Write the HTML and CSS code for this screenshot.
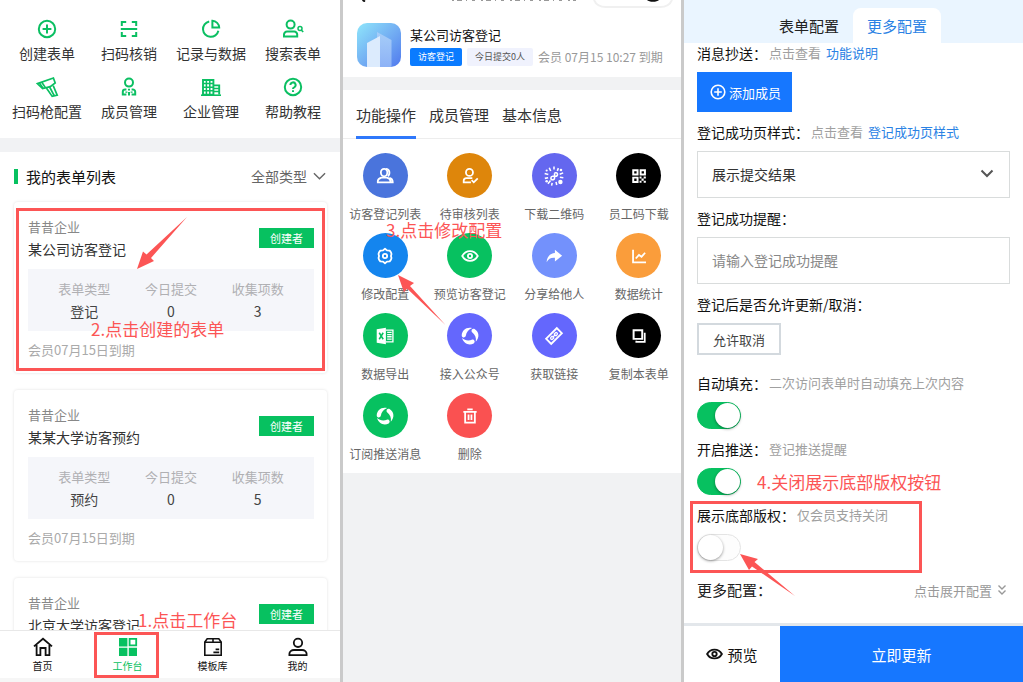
FILE: index.html
```html
<!DOCTYPE html>
<html lang="zh-CN">
<head>
<meta charset="utf-8">
<title>访客登记配置指引</title>
<link rel="stylesheet" href="styles.css">
</head>
<body>
<div class="board">

  <section class="panel workbench">
    <div class="scroll">
      <nav class="shortcuts">
        <a class="shortcut" href="#"><svg class="icon" viewBox="0 0 20 20"><circle cx="10" cy="10" r="8.2"/><path d="M10 5.6v8.8M5.6 10h8.8"/></svg>创建表单</a>
        <a class="shortcut" href="#"><svg class="icon" viewBox="0 0 20 20"><path d="M2.8 7V3h4.4M12.8 3h4.4v4M2.8 13v4h4.4M12.8 17h4.4v-4M1.8 10h16.4"/></svg>扫码核销</a>
        <a class="shortcut" href="#"><svg class="icon" viewBox="0 0 20 20"><path d="M8.2 2.4a7.8 7.8 0 1 0 9.2 9.4M11.4 1.8v6.8h6.8a7 7 0 0 0-6.8-6.8z"/></svg>记录与数据</a>
        <a class="shortcut" href="#"><svg class="icon" viewBox="0 0 20 20"><circle cx="7.6" cy="5.6" r="4"/><path d="M1 17.600v-2a3 3 0 0 1 3-3h7.200a3 3 0 0 1 3 3v2z"/><circle cx="17" cy="9.600" r="2" stroke-width="1.500"/><path d="M18.200 11l2 2" stroke-width="1.700"/></svg>搜索表单</a>
        <a class="shortcut" href="#"><svg class="icon" viewBox="0 0 20 20"><g stroke-width="1.700"><path d="M.4 6.600L16.400 1l1.800 5-5 3.600-7.600 2z"/><path d="M2.400 6l3.800 5.400M4.800 5.200l3.600 5.400M9.400 11l5.800 8.400 5-1.200-4-9.600M12.600 10l4.600 8.600"/></g></svg>扫码枪配置</a>
        <a class="shortcut" href="#"><svg class="icon" viewBox="0 0 20 20"><circle cx="10" cy="5.600" r="4"/><path d="M7.400 12.400H6.200A2.400 2.400 0 0 0 3.800 14.800v2.800h3.600M12.600 12.400h1.200a2.400 2.400 0 0 1 2.400 2.400v2.800h-3.600M10 11.800v1.800M10 15v3.600M7.400 14.400v1.400M12.600 14.400v1.400"/></svg>成员管理</a>
        <a class="shortcut" href="#"><svg class="icon" viewBox="0 0 20 20"><path d="M0 18.200h20" stroke-width="1.600"/><path d="M2 3h10.400v14.600H2zM12.400 8.400h5.800v9.200" stroke-width="1.900"/><path d="M5.400 3v14M8.800 3v14M2 6.600h10.400M2 10.200h10.400M2 13.800h10.400M13 11.600h5M13 14.600h5" stroke-width="1.500"/></svg>企业管理</a>
        <a class="shortcut" href="#"><svg class="icon" viewBox="0 0 20 20"><circle cx="10" cy="10" r="8.200"/><path d="M7.400 8a2.600 2.600 0 1 1 3.800 2.300c-.9.400-1.200.8-1.200 1.700M10 13.200v1.800"/></svg>帮助教程</a>
      </nav>
      <div class="list-head">
        <h2 class="list-title">我的表单列表</h2>
        <button class="filter" type="button">全部类型<svg class="filter-arrow" viewBox="0 0 14 8"><path d="M1 1l6 6 6-6"/></svg></button>
      </div>
      <div class="cards">
        <article class="card">
          <div class="card-head">
            <div><p class="org">昔昔企业</p><h3 class="form-name">某公司访客登记</h3></div>
            <span class="role">创建者</span>
          </div>
          <dl class="stats">
            <div><dt>表单类型</dt><dd>登记</dd></div>
            <div><dt>今日提交</dt><dd>0</dd></div>
            <div><dt>收集项数</dt><dd>3</dd></div>
          </dl>
          <p class="expiry">会员07月15日到期</p>
        </article>
        <article class="card">
          <div class="card-head">
            <div><p class="org">昔昔企业</p><h3 class="form-name">某某大学访客预约</h3></div>
            <span class="role">创建者</span>
          </div>
          <dl class="stats">
            <div><dt>表单类型</dt><dd>预约</dd></div>
            <div><dt>今日提交</dt><dd>0</dd></div>
            <div><dt>收集项数</dt><dd>5</dd></div>
          </dl>
          <p class="expiry">会员07月15日到期</p>
        </article>
        <article class="card">
          <div class="card-head">
            <div><p class="org">昔昔企业</p><h3 class="form-name">北京大学访客登记</h3></div>
            <span class="role">创建者</span>
          </div>
        </article>
      </div>
    </div>
    <nav class="tabbar">
      <a class="tab" href="#"><svg class="tab-icon" viewBox="0 0 20 20"><path d="M1 9.400L10 1.800l9 7.600M3.600 8v10.200h3.800V11h5.200v7.200h3.800V8"/></svg>首页</a>
      <a class="tab tab-on" href="#"><svg class="tab-icon" viewBox="0 0 20 20"><g fill="currentColor" stroke="none"><path d="M1 1h8.400v8.400H1zM1 10.800h8.400V19H1zM10.800 10.800H19V19h-8.200z"/></g><path d="M11.600 1.800h6.600v6.600h-6.600z"/></svg>工作台</a>
      <a class="tab" href="#"><svg class="tab-icon" viewBox="0 0 20 20"><path d="M1.800 5l2.400-3.200h11.600L18.200 5v13.200H1.800zM1.800 5.200h16.400M10 1.800v3.400M12.600 12.400h3.600M10.400 15.400h5.800" stroke-width="1.600"/></svg>模板库</a>
      <a class="tab" href="#"><svg class="tab-icon" viewBox="0 0 20 20"><circle cx="10" cy="5.800" r="4.200"/><path d="M1.400 18.200v-1.400c0-2 2-3.800 4.600-3.800h8c2.600 0 4.600 1.800 4.600 3.800v1.400z"/></svg>我的</a>
    </nav>
    <div class="mark mark-card"></div>
    <div class="mark mark-tab"></div>
    <svg class="arrow arrow-card" viewBox="0 0 50 52"><path d="M0 52L6 34.500l3.500 3L50 0 14 41l3 3z"/></svg>
    <p class="note note-card">2.点击创建的表单</p>
    <p class="note note-tab">1.点击工作台</p>
  </section>

  <section class="panel manage">
    <header class="form-head">
      <svg class="form-logo" viewBox="0 0 44 44">
        <defs>
          <linearGradient id="sky" x1="0" y1="0" x2="1" y2="1"><stop offset="0" stop-color="#8fe6fb"/><stop offset=".5" stop-color="#74b0f3"/><stop offset="1" stop-color="#5079ee"/></linearGradient>
          <linearGradient id="wall" x1="0" y1="0" x2="0" y2="1"><stop offset="0" stop-color="#a6cdf8"/><stop offset="1" stop-color="#8db2f6"/></linearGradient>
        </defs>
        <rect width="44" height="44" rx="10" fill="url(#sky)"/>
        <path d="M20 9l14.500 8v27H20z" fill="url(#wall)"/>
        <path d="M10 20l13-7v31H10z" fill="#dcebfd"/>
      </svg>
      <div class="form-info">
        <h1 class="form-title">某公司访客登记</h1>
        <div class="form-meta"><span class="chip chip-on">访客登记</span><span class="chip">今日提交0人</span><span class="valid">会员 07月15 10:27 到期</span></div>
      </div>
    </header>
    <div class="ops">
      <nav class="ops-tabs">
        <a class="ops-tab ops-tab-on" href="#">功能操作</a>
        <a class="ops-tab" href="#">成员管理</a>
        <a class="ops-tab" href="#">基本信息</a>
      </nav>
      <div class="ops-grid">
        <a class="op" href="#"><span class="disc royal"><svg class="icon" viewBox="0 0 20 20"><ellipse cx="9" cy="6.200" rx="3.600" ry="4.200"/><path d="M2 17v-1.400c0-2.400 2.200-3.200 4-3.800h6c2 .6 4 1.400 4 3.800V17zM11 2c4.400 0 5 6 2.200 8.200M15 12c2.400.6 3.600 2 3.600 5H16"/></svg></span>访客登记列表</a>
        <a class="op" href="#"><span class="disc amber"><svg class="icon" viewBox="0 0 20 20"><circle cx="9.400" cy="6" r="3.900"/><path d="M11 17H3v-1.600c0-2 1.200-3 3-3h6.600M11.800 14.600l2.400 2.400 4.400-4.400"/></svg></span>待审核列表</a>
        <a class="op" href="#"><span class="disc iris"><svg class="icon icon-wide" viewBox="0 0 24 24"><path d="M12.600 9v5.400a2 2 0 1 1-2-2.200h3a1.900 1.900 0 1 0-1-3.200M12 1.600v3.200M10 19.400l-.6 3M6.800 3l1.600 3.600M16.800 3.400l-1.200 3M1.800 9.200l4 1.200M18.200 10L22 8.600M2 14.600l3.600-.8M18.400 13.400l3.800.6M5.400 20.400l2.800-3.600M14.200 18.400l.8 3.400" stroke-width="1.700"/><circle cx="19" cy="18.600" r="2.400" fill="currentColor" stroke="none"/><circle cx="19.600" cy="5.400" r="1.400" fill="currentColor" stroke="none"/><circle cx="4" cy="17.800" r="1.400" fill="currentColor" stroke="none"/><circle cx="4" cy="6" r="1.200" fill="currentColor" stroke="none"/></svg></span>下载二维码</a>
        <a class="op" href="#"><span class="disc black"><svg class="icon" viewBox="0 0 20 20"><path d="M3.600 3.600h4.800v4.800H3.600zM11.800 3.600h4.800v4.800h-4.800zM3.600 11.800h4.800v4.800H3.600z" stroke-width="2.200"/><path d="M10.600 10.600h2.200v2.200h-2.200zM15.200 10.600h2.400v2.200h-2.400zM12.800 12.800h2.400v2.400h-2.400zM10.600 15.200h2.200v2.400h-2.200zM15.200 15.200h2.400v2.400h-2.400z" fill="currentColor" stroke="none"/></svg></span>员工码下载</a>
        <a class="op" href="#"><span class="disc azure"><svg class="icon" viewBox="0 0 20 20"><path d="M10 2l2.200 1.800 3 .2 1.400 1.800.6 2L16.600 10l.6 2.200-.6 2-1.400 1.800-3 .2L10 18l-2.200-1.800-3-.2-1.400-1.800-.6-2 .6-2.200-.6-2.200.6-2L4.800 4l3-.2z" stroke-linejoin="round"/><circle cx="10" cy="10" r="2.400"/></svg></span>修改配置</a>
        <a class="op" href="#"><span class="disc green"><svg class="icon" viewBox="0 0 20 20"><path d="M1.400 10C5.400 2.800 14.600 2.800 18.600 10 14.600 17.200 5.400 17.200 1.400 10z"/><circle cx="10" cy="10" r="2.300"/></svg></span>预览访客登记</a>
        <a class="op" href="#"><span class="disc sky"><svg class="icon" viewBox="0 0 20 20"><path d="M11 3l8 6.600-8 6.400v-4c-4.600-.4-7 1.200-9.200 5C2 11 5.400 7.200 11 6.800z" fill="currentColor" stroke="none"/></svg></span>分享给他人</a>
        <a class="op" href="#"><span class="disc orange"><svg class="icon" viewBox="0 0 20 20"><path d="M3.400 3v14h14.400M6.400 12.800l3.600-4 2.800 2 4-4.400"/></svg></span>数据统计</a>
        <a class="op" href="#"><span class="disc green"><svg class="icon" viewBox="0 0 20 20"><path d="M.8 2.600L11 .8v18.400L.8 17.400z" fill="currentColor" stroke="none"/><path d="M11 3.400h7.800v13.200H11M12.400 6h5M12.400 8.400h5M12.400 10.800h5M12.400 13.400h5" stroke-width="1.500"/><path class="cut-green" d="M3.600 6.400l4.400 7.200M8 6.400l-4.400 7.200"/></svg></span>数据导出</a>
        <a class="op" href="#"><span class="disc violet"><svg class="icon" viewBox="0 0 20 20"><g id="swirl" fill="currentColor" stroke="none"><path d="M.8 9.400C1 3.600 6-.4 12.400 1.200 8.600 2.600 6 5.400 5.200 10.400 4.200 12.400 1 12 .8 9.400z"/><path d="M.8 9.400C1 3.600 6-.4 12.400 1.200 8.600 2.600 6 5.400 5.200 10.400 4.200 12.400 1 12 .8 9.400z" transform="rotate(120 10 10)"/><path d="M.8 9.400C1 3.600 6-.4 12.400 1.200 8.600 2.600 6 5.400 5.200 10.400 4.200 12.400 1 12 .8 9.400z" transform="rotate(240 10 10)"/></g></svg></span>接入公众号</a>
        <a class="op" href="#"><span class="disc violet"><svg class="icon" viewBox="0 0 20 20"><g transform="rotate(-45 10 10)"><rect x="1.600" y="6" width="16.800" height="8" stroke-width="2"/><path d="M9 8.600H6.600a1.400 1.400 0 0 0 0 2.800H9M11 8.600h2.400a1.400 1.400 0 0 1 0 2.800H11M7.600 10h4.800" stroke-width="1.400"/></g></svg></span>获取链接</a>
        <a class="op" href="#"><span class="disc black"><svg class="icon" viewBox="0 0 20 20"><path d="M4 3.600h9.600v9.600H4z" stroke-width="2.200"/><path d="M15.400 7.200h1v9.400H7v-1.400" stroke-width="1.900"/></svg></span>复制本表单</a>
        <a class="op" href="#"><span class="disc green"><svg class="icon" viewBox="0 0 20 20"><use href="#swirl"/></svg></span>订阅推送消息</a>
        <a class="op" href="#"><span class="disc red"><svg class="icon" viewBox="0 0 20 20"><path d="M2.600 5.400h14.800M7 2.600h6M4.600 5.400v12h10.800v-12M8.400 8.400v6M11.600 8.400v6" stroke-width="2"/></svg></span>删除</a>
      </div>
    </div>
    <svg class="back-edge" viewBox="0 0 6 2"><path d="M1.500 0l2.500 1.500" stroke="#111"/></svg>
    <svg class="title-edge" viewBox="0 0 126 2"><path d="M2 .5h124" stroke="#999" stroke-width="1" stroke-dasharray="2 3 5 4 1 5 3 6"/></svg>
    <svg class="capsule" viewBox="0 0 80 8"><path d="M1 0c2 5 6 7 12 7h54c6 0 10-2 12-7" stroke="#f0f0f0" fill="none"/><path d="M54 0c2 2.400 10 2.400 12 0z" fill="#111"/></svg>
    <svg class="arrow arrow-config" viewBox="0 0 48 50"><path d="M0 0l16 8-4 3 35.500 39L9 13.500l-3 4z"/></svg>
    <p class="note note-config">3.点击修改配置</p>
  </section>

  <section class="panel settings">
    <nav class="set-tabs">
      <a class="set-tab" href="#">表单配置</a>
      <a class="set-tab set-tab-on" href="#">更多配置</a>
    </nav>
    <form class="set-form">
      <div class="field">
        <p class="label">消息抄送：<span class="hint">点击查看 <a class="link" href="#">功能说明</a></span></p>
        <button class="add" type="button"><svg class="add-icon" viewBox="0 0 16 16"><circle cx="8" cy="8" r="6.800"/><path d="M8 4.200v7.600M4.200 8h7.600"/></svg>添加成员</button>
      </div>
      <div class="field">
        <p class="label"><label for="style">登记成功页样式：</label><span class="hint">点击查看 <a class="link" href="#">登记成功页样式</a></span></p>
        <div class="select-wrap">
          <select class="box" id="style"><option>展示提交结果</option></select>
          <svg class="select-arrow" viewBox="0 0 14 10"><path d="M1.500 1.500L7 7l5.500-5.500"/></svg>
        </div>
      </div>
      <div class="field">
        <label class="label" for="tip">登记成功提醒：</label>
        <input class="box" id="tip" type="text" placeholder="请输入登记成功提醒">
      </div>
      <div class="field field-loose">
        <p class="label">登记后是否允许更新/取消：</p>
        <button class="allow" type="button">允许取消</button>
      </div>
      <div class="field">
        <p class="label"><label for="fill">自动填充：</label><span class="hint">二次访问表单时自动填充上次内容</span></p>
        <input class="switch" id="fill" type="checkbox" checked>
      </div>
      <div class="field">
        <p class="label"><label for="push">开启推送：</label><span class="hint">登记推送提醒</span></p>
        <input class="switch" id="push" type="checkbox" checked>
      </div>
      <div class="field field-loose">
        <p class="label"><label for="copy">展示底部版权：</label><span class="hint">仅会员支持关闭</span></p>
        <input class="switch" id="copy" type="checkbox">
      </div>
      <div class="more">
        <span class="more-title">更多配置：</span>
        <button class="expand" type="button">点击展开配置<svg class="expand-icon" viewBox="0 0 10 12"><path d="M1.500 1.500L5 5l3.500-3.500M1.500 6.500L5 10l3.500-3.500"/></svg></button>
      </div>
    </form>
    <footer class="actions">
      <button class="preview" type="button"><svg class="eye" viewBox="0 0 18 14"><path d="M1.200 7C4.600.8 13.400.8 16.800 7 13.400 13.200 4.600 13.200 1.200 7z"/><circle cx="9" cy="7" r="2.300"/></svg>预览</button>
      <button class="submit" type="submit">立即更新</button>
    </footer>
    <div class="mark mark-copy"></div>
    <svg class="arrow arrow-copy" viewBox="0 0 55 42"><path d="M0 0l18 5-3.500 3L55 42 12 12.500 9 16z"/></svg>
    <p class="note note-copy">4.关闭展示底部版权按钮</p>
  </section>

</div>
</body>
</html>
```

FILE: styles.css
```css
* { box-sizing: border-box; }
body, h1, h2, h3, p, dl, dd { margin: 0; }
body, button, input, select {
  font-family: "Noto Sans CJK SC", "Noto Sans", sans-serif;
  font-weight: 400;
}
h1, h2, h3 { font-weight: 400; }
a { color: inherit; text-decoration: none; }
button { border: 0; padding: 0; background: none; color: inherit; cursor: pointer; }
svg { display: block; fill: none; stroke: currentColor; stroke-width: 2; flex: none; }

.board {
  display: grid;
  grid-template-columns: 340fr 338fr 339fr;
  gap: 3px;
  height: 100vh;
  background: #cacaca;
}
.panel {
  position: relative;
  display: flex;
  flex-direction: column;
  min-width: 0;
  overflow: hidden;
  background: #fff;
}
.icon { width: 20px; height: 20px; overflow: visible; }

/* workbench */
.scroll { flex: 1; min-height: 0; overflow: hidden; }
.shortcuts {
  display: grid;
  grid-template-columns: repeat(4, 1fr);
  row-gap: 13px;
  padding: 19px 6px 16px;
  border-bottom: 14px solid #f1f2f4;
}
.shortcut {
  display: flex;
  flex-direction: column;
  align-items: center;
  gap: 3px;
  font-size: 14px;
  line-height: 22px;
  color: #333;
  white-space: nowrap;
}
.shortcut .icon { color: #0bbf62; }
.list-head {
  display: flex;
  align-items: center;
  justify-content: space-between;
  height: 50px;
  padding: 0 14px 2px;
}
.list-title {
  display: flex;
  align-items: center;
  gap: 8px;
  font-size: 15px;
  color: #111;
}
.list-title::before { content: ""; width: 4px; height: 15px; background: #07c160; }
.filter {
  display: flex;
  align-items: center;
  gap: 6px;
  font-size: 14px;
  color: #666;
}
.filter-arrow { width: 13px; height: 8px; stroke-width: 1.5; }
.cards { display: flex; flex-direction: column; gap: 17px; padding: 0 13px 0 14px; }
.card {
  padding: 14px 13px 12px 14px;
  border-radius: 4px;
  box-shadow: 0 0 3px rgba(0, 0, 0, .13);
}
.card-head { display: flex; align-items: center; justify-content: space-between; }
.org { font-size: 13px; line-height: 22px; color: #888; }
.form-name { font-size: 14px; line-height: 23px; color: #333; }
.role {
  width: 55px;
  margin-bottom: 2px;
  font-size: 11px;
  line-height: 20px;
  text-align: center;
  color: #fff;
  background: #07c160;
}
.stats {
  display: grid;
  grid-template-columns: repeat(3, 1fr);
  margin: 8px 0;
  padding: 9px 13px 8px;
  text-align: center;
  background: #f5f6fa;
}
.stats dt { font-size: 13px; line-height: 22px; color: #b0b0b3; }
.stats dd { font-size: 14px; line-height: 23px; color: #444; }
.expiry { font-size: 13px; line-height: 22px; color: #aaa; }
.tabbar {
  display: grid;
  grid-template-columns: repeat(4, 1fr);
  padding: 6px 0 3px;
  background: #fff;
  border-top: 1px solid #e8e8e8;
  border-bottom: 4px solid #f6f6f6;
}
.tab {
  display: flex;
  flex-direction: column;
  align-items: center;
  font-size: 10px;
  line-height: 18px;
  color: #111;
}
.tab-icon { width: 20px; height: 20px; stroke-width: 1.8; }
.tab-on { color: #07c160; }

/* form management */
.manage { background: #f1f2f3; }
.form-head {
  display: flex;
  align-items: center;
  gap: 9px;
  padding: 23px 14px 10px;
  margin-bottom: 13px;
  background: #fff;
}
.form-logo { width: 44px; height: 44px; stroke: none; }
.form-info { display: flex; flex-direction: column; gap: 2px; }
.form-title { font-size: 13px; line-height: 22px; color: #111; }
.form-meta { display: flex; align-items: center; gap: 5px; white-space: nowrap; }
.chip {
  padding: 0 8px;
  font-size: 9px;
  line-height: 18px;
  color: #555;
  background: #f0f2fd;
  border-radius: 2px;
}
.chip-on { color: #fff; background: #0a7bff; }
.valid { font-size: 12px; line-height: 18px; color: #999; }
.ops { background: #fff; }
.ops-tabs {
  display: flex;
  gap: 13px;
  padding: 0 13px;
  border-bottom: 1px solid #ededed;
}
.ops-tab {
  margin-bottom: -1px;
  padding: 13px 0 9px;
  font-size: 15px;
  line-height: 24px;
  color: #333;
  border-bottom: 3px solid transparent;
}
.ops-tab-on { border-color: #2f78fb; }
.ops-grid {
  display: grid;
  grid-template-columns: repeat(4, 1fr);
  row-gap: 9px;
  padding: 14px 0 9px;
}
.op {
  display: flex;
  flex-direction: column;
  align-items: center;
  gap: 6px;
  font-size: 12px;
  line-height: 20px;
  color: #666;
  white-space: nowrap;
}
.disc {
  display: grid;
  place-items: center;
  width: 45px;
  height: 45px;
  border-radius: 50%;
  color: #fff;
}
.disc .icon { width: 18px; height: 18px; }
.disc .icon-wide { width: 22px; height: 22px; }
.royal { background: #4a74dc; }
.amber { background: #de860b; }
.iris { background: #6467ef; }
.black { background: #000; }
.azure { background: #1485ee; }
.green { background: #07c160; }
.sky { background: #7391fc; }
.orange { background: #fa9d3b; }
.violet { background: #6467fd; }
.red { background: #fa5151; }
.cut-green { stroke: #07c160; stroke-width: 1.7; }
.capsule { position: absolute; top: 0; right: 8px; width: 80px; height: 8px; stroke: none; }
.back-edge { position: absolute; top: 0; left: 18px; width: 6px; height: 2px; }
.title-edge { position: absolute; top: 0; left: 107px; width: 126px; height: 2px; }

/* settings */
.set-tabs {
  display: flex;
  justify-content: flex-end;
  padding: 8px 82px 0 0;
  background: #eaf5ff;
}
.set-tab { padding: 0 14px; font-size: 15px; line-height: 35px; color: #222; }
.set-tab-on { color: #2a82e4; background: #fff; border-radius: 8px 8px 0 0; }
.set-form { flex: 1; min-height: 0; padding: 0 13px; overflow: hidden; }
.field {
  display: flex;
  flex-direction: column;
  align-items: flex-start;
  gap: 9px;
  margin-bottom: 10px;
}
.field-loose { margin-bottom: 18px; }
.label {
  display: flex;
  gap: 2px;
  font-size: 14px;
  line-height: 20px;
  color: #111;
  white-space: nowrap;
}
.hint { font-size: 13px; color: #a0a0a0; }
.link { margin-left: 2px; color: #2a82e4; }
.add {
  display: flex;
  align-items: center;
  gap: 3px;
  height: 40px;
  padding: 0 11px 0 13px;
  font-size: 13px;
  color: #fff;
  background: #1677ff;
}
.add-icon { width: 16px; height: 16px; stroke-width: 1.6; }
.select-wrap { position: relative; align-self: stretch; }
.box {
  display: block;
  width: 100%;
  height: 47px;
  padding: 0 14px 2px;
  font-size: 14px;
  color: #333;
  background: #fff;
  border: 1px solid #d9dcdc;
  border-radius: 0;
  appearance: none;
}
.box::placeholder { color: #888; }
.select-arrow {
  position: absolute;
  top: 18px;
  right: 16px;
  width: 14px;
  height: 10px;
  color: #555;
  pointer-events: none;
}
.allow {
  height: 32px;
  padding: 0 14px;
  font-size: 13px;
  color: #444;
  border: 2px solid #d3d9de;
}
.switch {
  position: relative;
  width: 44px;
  height: 27px;
  margin: 0;
  border: 1px solid #e4e4e4;
  border-radius: 14px;
  background: #fdfdfd;
  appearance: none;
}
.switch::before {
  content: "";
  display: block;
  width: 25px;
  height: 25px;
  border-radius: 50%;
  background: #fff;
  box-shadow: 0 1px 3px rgba(0, 0, 0, .4);
}
.switch:checked { background: #07c160; border-color: #07c160; }
.switch:checked::before { margin-left: auto; }
.more { display: flex; align-items: center; justify-content: space-between; }
.more-title { font-size: 15px; line-height: 22px; color: #222; }
.expand {
  display: flex;
  align-items: center;
  gap: 5px;
  padding-right: 3px;
  font-size: 13px;
  color: #999;
}
.expand-icon { width: 10px; height: 12px; stroke-width: 1.4; }
.actions {
  display: grid;
  grid-template-columns: 96fr 243fr;
  height: 59px;
  border-top: 3px solid #e3e7eb;
}
.preview {
  display: flex;
  align-items: center;
  justify-content: center;
  gap: 4px;
  font-size: 15px;
  color: #111;
}
.eye { width: 17px; height: 14px; }
.submit { font-size: 15px; color: #fff; background: #1677ff; }

/* annotations drawn over the screens */
.mark { position: absolute; border: 3px solid #fc5555; pointer-events: none; }
.mark-card { left: 16px; top: 208px; width: 309px; height: 163px; }
.mark-tab { left: 94px; top: 632px; width: 65px; height: 46px; }
.mark-copy { left: 6px; top: 501px; width: 232px; height: 72px; }
.arrow { position: absolute; fill: #fc5555; stroke: none; pointer-events: none; }
.arrow-card { left: 137px; top: 217px; width: 50px; height: 52px; }
.arrow-config { left: 55px; top: 275px; width: 48px; height: 50px; }
.arrow-copy { left: 56px; top: 554px; width: 55px; height: 42px; }
.note {
  position: absolute;
  font-size: 17px;
  line-height: 24px;
  color: #fc5555;
  white-space: nowrap;
  pointer-events: none;
}
.note-card { left: 91px; top: 317px; }
.note-tab { left: 138px; top: 608px; }
.note-config { left: 43px; top: 218px; }
.note-copy { left: 73px; top: 470px; }
```
